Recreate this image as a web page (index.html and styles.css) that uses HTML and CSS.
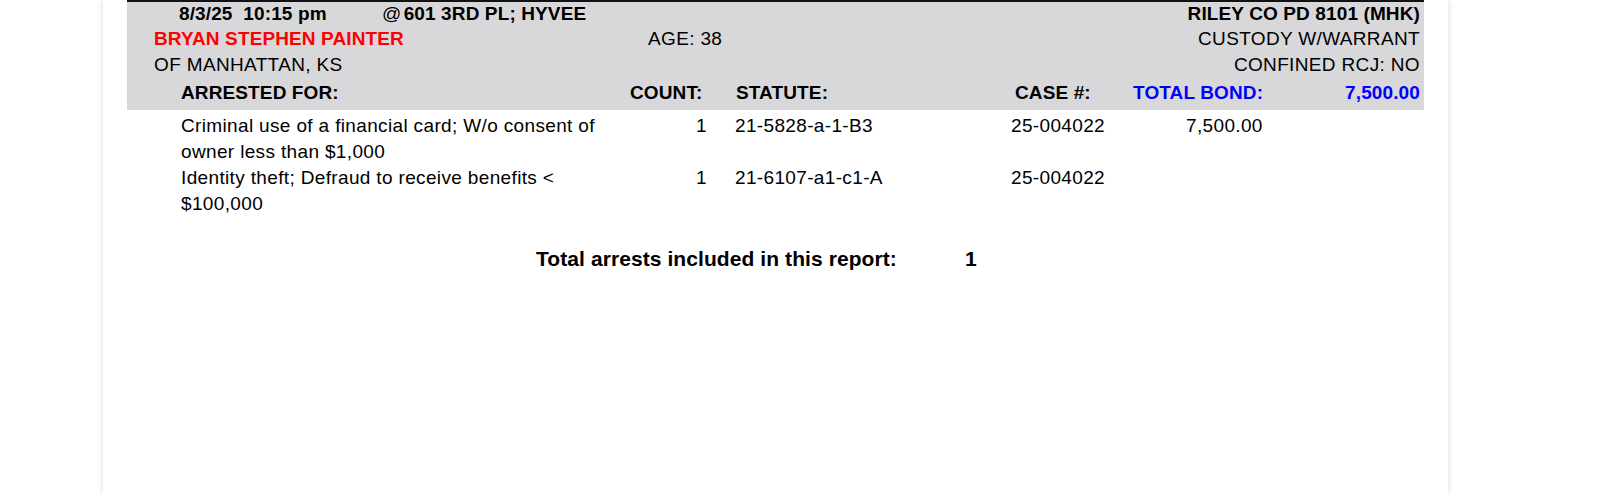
FILE: index.html
```html
<!DOCTYPE html>
<html>
<head>
<meta charset="utf-8">
<title>Arrest Report</title>
<link rel="stylesheet" href="styles.css">
</head>
<body>
<div class="page">
  <div class="report">
    <div class="head">
      <div class="hrow r1">
        <span class="dt b">8/3/25  10:15 pm</span>
        <span class="loc"><span class="at">@</span><span class="b">601 3RD PL; HYVEE</span></span>
        <span class="right b">RILEY CO PD 8101 (MHK)</span>
      </div>
      <div class="hrow r2">
        <span class="name b">BRYAN STEPHEN PAINTER</span>
        <span class="age">AGE: 38</span>
        <span class="right">CUSTODY W/WARRANT</span>
      </div>
      <div class="hrow r3">
        <span class="city">OF MANHATTAN, KS</span>
        <span class="right">CONFINED RCJ: NO</span>
      </div>
      <div class="cols b">
        <span class="c-desc">ARRESTED FOR:</span>
        <span class="c-count">COUNT:</span>
        <span class="c-stat">STATUTE:</span>
        <span class="c-case">CASE #:</span>
        <span class="c-bond"><span>TOTAL BOND:</span><span>7,500.00</span></span>
      </div>
    </div>
    <div class="charges">
      <div class="charge">
        <span class="d-desc">Criminal use of a financial card; W/o consent of owner less than $1,000</span>
        <span class="d-count">1</span>
        <span class="d-stat">21-5828-a-1-B3</span>
        <span class="d-case">25-004022</span>
        <span class="d-bond">7,500.00</span>
      </div>
      <div class="charge">
        <span class="d-desc">Identity theft; Defraud to receive benefits &lt; $100,000</span>
        <span class="d-count">1</span>
        <span class="d-stat">21-6107-a1-c1-A</span>
        <span class="d-case">25-004022</span>
        <span class="d-bond"></span>
      </div>
    </div>
    <div class="total">
      <span class="total-label">Total arrests included in this report:</span>
      <span class="total-num">1</span>
    </div>
  </div>
</div>
</body>
</html>
```
FILE: styles.css
```css
html, body {
  margin: 0;
  padding: 0;
  background: #ffffff;
  overflow: hidden;
}
body {
  font-family: "Liberation Sans", Arial, sans-serif;
  font-size: 19px;
  letter-spacing: 0.35px;
  color: #000;
}
.page {
  margin-left: 103px;
  width: 1345px;
  min-height: 100vh;
  background: #fff;
  box-shadow: 0 0 6px rgba(0, 0, 0, 0.16);
}
.report {
  padding-left: 24px;
  width: 1297px;
}
.b { font-weight: bold; letter-spacing: 0.12px; }
.head {
  background: #d8d8da;
  border-top: 2px solid #111;
  padding-bottom: 4px;
}
.hrow {
  display: flex;
  padding-right: 4px;
  line-height: 25.6px;
  white-space: pre;
}
.right { margin-left: auto; }
.r1 { line-height: 24px; padding-left: 52px; }
.dt { width: 203px; }
.at { font-weight: normal; margin-right: 2px; }
.r2 { padding-left: 27px; }
.name { color: #ff0000; width: 494px; }
.r3 { padding-left: 27px; }
.cols {
  display: grid;
  grid-template-columns: 449px 106px 279px 118px 1fr;
  padding: 3px 4px 0 54px;
  line-height: 25.6px;
}
.c-bond {
  display: flex;
  justify-content: space-between;
  color: #0000ff;
}
.charges {
  padding-top: 3px;
  padding-left: 54px;
}
.charge {
  display: grid;
  grid-template-columns: 430px 96px 304px 175px 100px;
  line-height: 26px;
}
.d-count { text-align: right; }
.d-stat { padding-left: 28px; }
.total {
  display: flex;
  margin-top: 29px;
  padding-left: 409px;
  font-weight: bold;
  font-size: 21px;
  letter-spacing: 0.08px;
  line-height: 26px;
}
.total-label { width: 429px; }
```
